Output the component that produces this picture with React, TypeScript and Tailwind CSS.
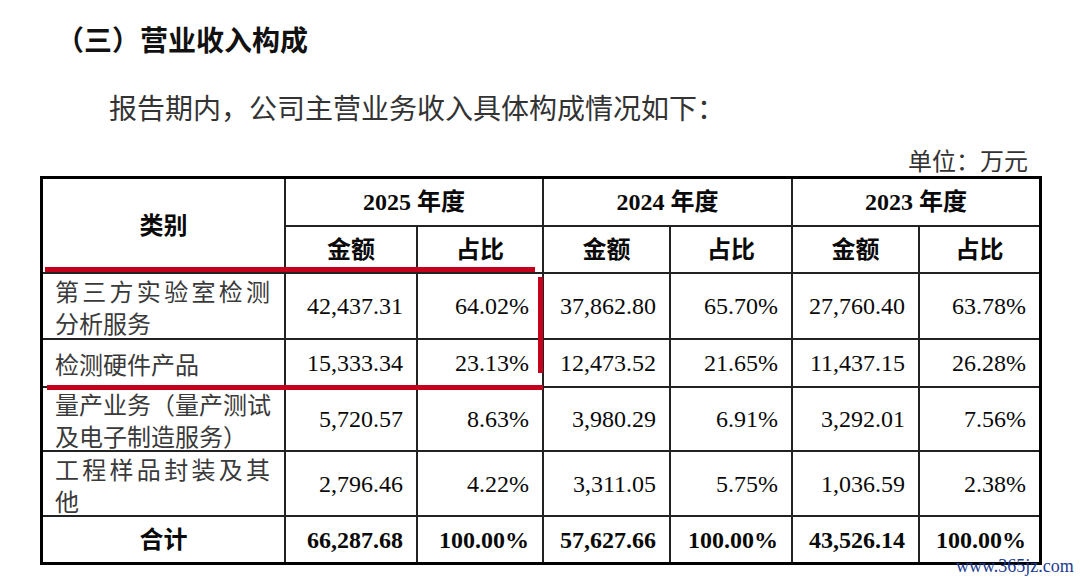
import React from "react";

const serif = { fontFamily: '"Liberation Serif", "Noto Sans CJK SC", serif' };
const cjk = { fontFamily: '"Noto Sans CJK SC", sans-serif' };

type Row = { label: string[]; vals: string[] };

const rows: Row[] = [
  { label: ["第三方实验室检测", "分析服务"], vals: ["42,437.31", "64.02%", "37,862.80", "65.70%", "27,760.40", "63.78%"] },
  { label: ["检测硬件产品"], vals: ["15,333.34", "23.13%", "12,473.52", "21.65%", "11,437.15", "26.28%"] },
  { label: ["量产业务（量产测试", "及电子制造服务）"], vals: ["5,720.57", "8.63%", "3,980.29", "6.91%", "3,292.01", "7.56%"] },
  { label: ["工程样品封装及其", "他"], vals: ["2,796.46", "4.22%", "3,311.05", "5.75%", "1,036.59", "2.38%"] },
];

const totals = ["66,287.68", "100.00%", "57,627.66", "100.00%", "43,526.14", "100.00%"];

function LabelCell({ lines }: { lines: string[] }) {
  return (
    <div className="bg-white flex flex-col justify-center pl-[12px] pt-[2px] text-[24px] leading-[32px] text-[#3a3a3a]" style={cjk}>
      {lines.map((l, i) => (
        <div
          key={i}
          className={
            lines.length > 1 && i === 0
              ? "w-[215px] whitespace-nowrap text-justify [text-align-last:justify]"
              : "whitespace-nowrap"
          }
        >
          {l}
        </div>
      ))}
    </div>
  );
}

function NumCell({ v, bold }: { v: string; bold?: boolean }) {
  return (
    <div
      className={`bg-white flex items-center justify-end pr-[13px] text-[24px] leading-[28px] text-[#0a0a0a] ${bold ? "font-bold" : ""}`}
      style={serif}
    >
      {v}
    </div>
  );
}

function HeadCell({ children, className = "" }: { children: React.ReactNode; className?: string }) {
  return (
    <div
      className={`bg-white flex items-center justify-center text-[24px] leading-[28px] font-bold text-[#0a0a0a] ${className}`}
      style={serif}
    >
      {children}
    </div>
  );
}

export default function App() {
  return (
    <div className="relative w-[1080px] h-[582px] overflow-hidden bg-white flex flex-col">
      <div className="mt-[25px] pl-[56px] h-[28px] text-[28px] leading-[28px] font-bold text-[#111]" style={cjk}>
        （三）营业收入构成
      </div>
      <div className="mt-[40px] pl-[109px] h-[28px] text-[28px] leading-[28px] text-[#333]" style={cjk}>
        报告期内，公司主营业务收入具体构成情况如下：
      </div>
      <div className="mt-[27px] pr-[52px] h-[24px] text-right text-[24px] leading-[24px] text-[#333]" style={cjk}>
        单位：万元
      </div>
      <div className="mt-[4px] ml-[40px] w-[1002px] grid grid-cols-[241px_130px_124px_125px_120px_125px_119px] grid-rows-[46px_45px_64px_46px_62px_63px_45px] gap-[2px] bg-[#222] border-[3px] border-black">
        <HeadCell className="row-span-2">类别</HeadCell>
        <HeadCell className="col-span-2">2025 年度</HeadCell>
        <HeadCell className="col-span-2">2024 年度</HeadCell>
        <HeadCell className="col-span-2">2023 年度</HeadCell>
        <HeadCell>金额</HeadCell>
        <HeadCell>占比</HeadCell>
        <HeadCell>金额</HeadCell>
        <HeadCell>占比</HeadCell>
        <HeadCell>金额</HeadCell>
        <HeadCell>占比</HeadCell>
        {rows.map((r, i) => (
          <React.Fragment key={i}>
            <LabelCell lines={r.label} />
            {r.vals.map((v, j) => (
              <NumCell key={j} v={v} />
            ))}
          </React.Fragment>
        ))}
        <HeadCell>合计</HeadCell>
        {totals.map((v, j) => (
          <NumCell key={j} v={v} bold />
        ))}
      </div>

      {/* red annotation marks */}
      <div className="absolute left-[45px] top-[267px] w-[490px] h-[5px] bg-[#c4001c]" />
      <div className="absolute left-[538px] top-[277px] w-[5px] h-[96px] bg-[#c4001c]" />
      <div className="absolute left-[47px] top-[385px] w-[496px] h-[5px] bg-[#c4001c]" />

      {/* watermark */}
      <div
        className="absolute left-[956px] top-[555px] text-[18px] leading-[22px] text-[#1c3c90]"
        style={serif}
      >
        www.365jz.com
      </div>
    </div>
  );
}
